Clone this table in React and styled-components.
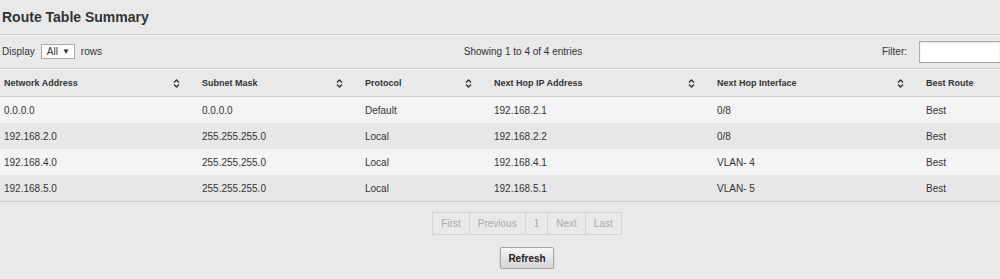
import React from 'react';
import styled, { createGlobalStyle } from 'styled-components';

const GlobalStyle = createGlobalStyle`
  body {
    margin: 0;
    background: #e9e9e9;
    font-family: "Liberation Sans", Arial, sans-serif;
    color: #333;
  }
`;

const Page = styled.div`
  width: 1000px;
  overflow: hidden;
  background: #e9e9e9;
`;

const Title = styled.h1`
  margin: 0;
  height: 34px;
  padding-left: 2px;
  display: flex;
  align-items: center;
  font-size: 14px;
  font-weight: bold;
  color: #333;
  border-bottom: 1px solid #cfcfcf;
  box-shadow: 0 1px 0 #f7f7f7;
`;

const Toolbar = styled.div`
  height: 33px;
  display: grid;
  grid-template-columns: 1fr auto 1fr;
  align-items: center;
  font-size: 10px;
  color: #333;
  border-bottom: 1px solid #cfcfcf;
`;

const Length = styled.div`
  display: flex;
  align-items: center;
  gap: 6px;
  padding-left: 2px;
`;

const Select = styled.div`
  display: flex;
  align-items: center;
  gap: 4px;
  height: 13px;
  padding: 0 4px 0 5px;
  background: #fff;
  border: 1px solid #aaa;
  font-size: 10px;
  span { font-size: 8px; }
`;

const Info = styled.div`
  text-align: center;
  padding-left: 46px;
`;

const FilterBox = styled.div`
  display: flex;
  align-items: center;
  justify-content: flex-end;
  gap: 12px;
`;

const FilterInput = styled.div`
  width: 80px;
  height: 20px;
  background: #fff;
  border: 1px solid #aaa;
  border-right: none;
  box-shadow: inset 0 1px 2px rgba(0, 0, 0, 0.12);
`;

const Table = styled.table`
  width: 1000px;
  border-collapse: collapse;
  table-layout: fixed;
  font-size: 10px;
  border-bottom: 1px solid #cfcfcf;
`;

const HeadCell = styled.th`
  height: 26px;
  padding: 0 4px;
  text-align: left;
  font-size: 9px;
  font-weight: bold;
  color: #333;
  border-top: 1px solid #f7f7f7;
  border-bottom: 1px solid #cfcfcf;
`;

const HeadInner = styled.div`
  display: flex;
  align-items: center;
  justify-content: space-between;
  padding-right: ${p => p.$pad}px;
`;

const Row = styled.tr`
  background: ${p => (p.$odd ? '#f4f4f4' : '#e7e7e7')};
`;

const Cell = styled.td`
  height: 26px;
  padding: 0 4px;
  color: #333;
  white-space: nowrap;
`;

const Footer = styled.div`
  display: flex;
  flex-direction: column;
  align-items: center;
  padding: 10px 0 0 54px;
  gap: 12px;
`;

const Pager = styled.div`
  display: flex;
  border: 1px solid #d4d4d4;
`;

const PageButton = styled.span`
  height: 21px;
  padding: 0 8px;
  display: flex;
  align-items: center;
  font-size: 10px;
  color: #aaa;
  border-left: ${p => (p.$first ? 'none' : '1px solid #d4d4d4')};
`;

const RefreshButton = styled.button`
  width: 54px;
  height: 22px;
  font-family: inherit;
  font-size: 10px;
  font-weight: bold;
  color: #222;
  border: 1px solid #a5a5a5;
  border-radius: 2px;
  background: linear-gradient(#f6f6f6, #d6d6d6);
  box-shadow: 0 1px 2px rgba(0, 0, 0, 0.2);
  padding: 0;
`;

const SortIcon = () => (
  <svg width="7" height="9" viewBox="0 0 7 9">
    <path d="M1 3.5 L3.5 1 L6 3.5 M1 5.5 L3.5 8 L6 5.5" fill="none" stroke="#333" strokeWidth="1.3" />
  </svg>
);

const columns = [
  { label: 'Network Address', width: 198, pad: 14 },
  { label: 'Subnet Mask', width: 163, pad: 14 },
  { label: 'Protocol', width: 129, pad: 14 },
  { label: 'Next Hop IP Address', width: 223, pad: 14 },
  { label: 'Next Hop Interface', width: 209, pad: 14 },
  { label: 'Best Route', width: 78, pad: 0 },
];

const routes = [
  ['0.0.0.0', '0.0.0.0', 'Default', '192.168.2.1', '0/8', 'Best'],
  ['192.168.2.0', '255.255.255.0', 'Local', '192.168.2.2', '0/8', 'Best'],
  ['192.168.4.0', '255.255.255.0', 'Local', '192.168.4.1', 'VLAN- 4', 'Best'],
  ['192.168.5.0', '255.255.255.0', 'Local', '192.168.5.1', 'VLAN- 5', 'Best'],
];

export default function App() {
  return (
    <Page>
      <GlobalStyle />
      <Title>Route Table Summary</Title>
      <Toolbar>
        <Length>
          Display
          <Select>All <span>▼</span></Select>
          rows
        </Length>
        <Info>Showing 1 to 4 of 4 entries</Info>
        <FilterBox>
          Filter:
          <FilterInput />
        </FilterBox>
      </Toolbar>
      <Table>
        <colgroup>
          {columns.map(c => <col key={c.label} style={{ width: c.width }} />)}
        </colgroup>
        <thead>
          <tr>
            {columns.map((c, i) => (
              <HeadCell key={c.label}>
                <HeadInner $pad={c.pad}>
                  {c.label}
                  {i < columns.length - 1 && <SortIcon />}
                </HeadInner>
              </HeadCell>
            ))}
          </tr>
        </thead>
        <tbody>
          {routes.map((r, i) => (
            <Row key={r[0]} $odd={i % 2 === 0}>
              {r.map((v, j) => <Cell key={j}>{v}</Cell>)}
            </Row>
          ))}
        </tbody>
      </Table>
      <Footer>
        <Pager>
          <PageButton $first>First</PageButton>
          <PageButton>Previous</PageButton>
          <PageButton>1</PageButton>
          <PageButton>Next</PageButton>
          <PageButton>Last</PageButton>
        </Pager>
        <RefreshButton>Refresh</RefreshButton>
      </Footer>
    </Page>
  );
}
